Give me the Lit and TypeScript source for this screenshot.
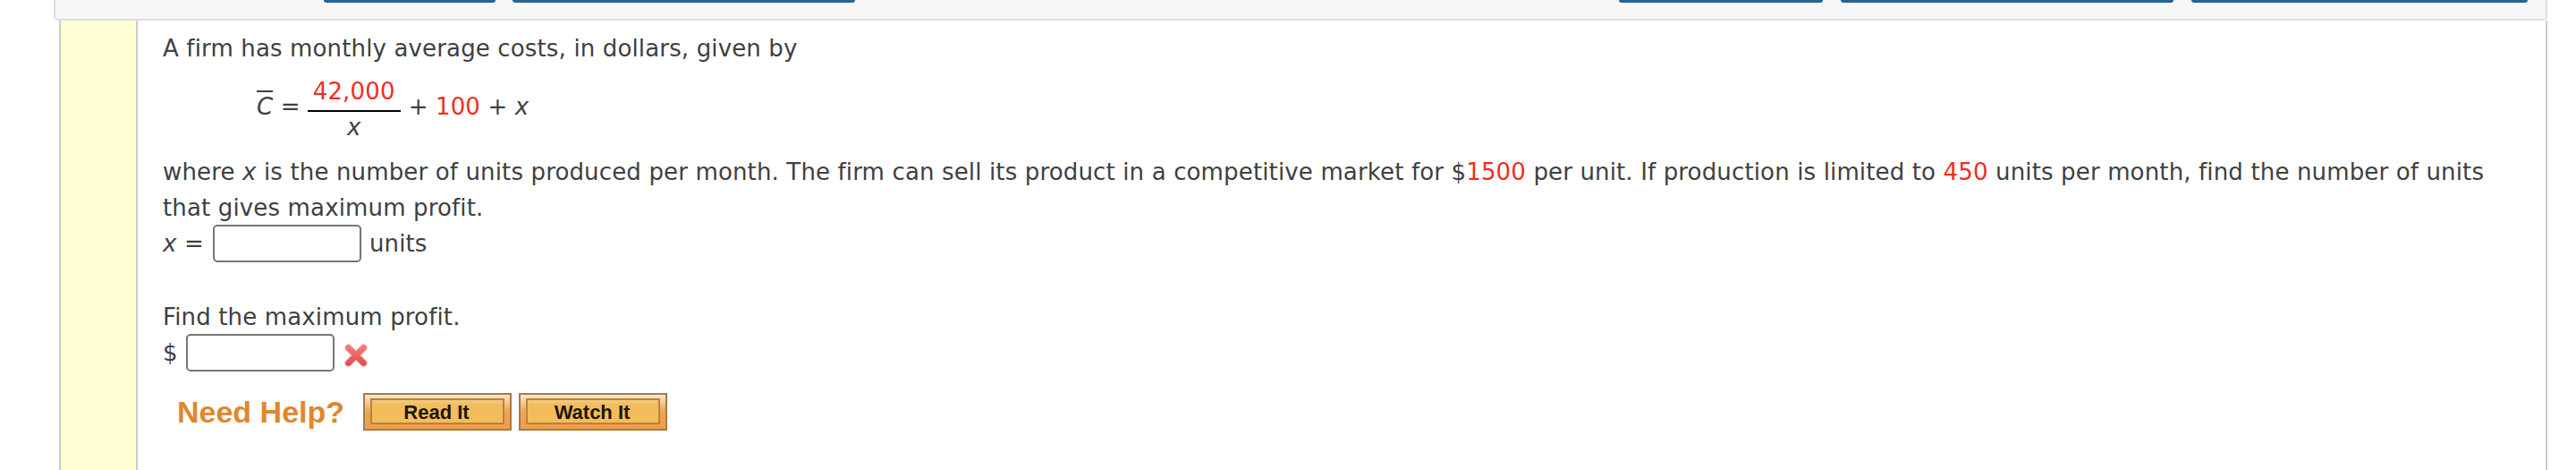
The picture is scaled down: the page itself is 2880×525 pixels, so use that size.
import { LitElement, html, css } from "lit";
import { customElement, property } from "lit/decorators.js";

@customElement("help-button")
class HelpButton extends LitElement {
  static styles = css`
    :host {
      display: block;
    }

    button {
      display: block;
      box-sizing: border-box;
      width: 166px;
      height: 42px;
      margin: 0;
      padding: 4px 6px 5px;
      border: 2px solid #ab7a42;
      background: linear-gradient(#fbe6d0, #f7cfa4 18%, #efa552 48%, #ee9f48);
      cursor: pointer;
    }

    span {
      display: block;
      box-sizing: border-box;
      height: 29px;
      padding-right: 2px;
      border: 2px solid #b98242;
      background: linear-gradient(#f5cb84, #f3bd5c 20%);
      color: #1c1608;
      font: bold 22px/27px "Liberation Sans", Arial, sans-serif;
      text-align: center;
    }
  `;

  @property() label = "";

  render() {
    return html`<button><span>${this.label}</span></button>`;
  }
}

@customElement("app-root")
class AppRoot extends LitElement {
  static styles = css`
    :host {
      display: block;
      height: 525px;
      overflow: hidden;
      background: #fff;
      color: #404040;
      font: 26px/40px "DejaVu Sans", Verdana, sans-serif;
      letter-spacing: 0.145px;
    }

    .toolbar {
      display: flex;
      box-sizing: border-box;
      width: 2788px;
      height: 23px;
      margin-left: 60px;
      padding-left: 300px;
      border: 2px solid #dedede;
      border-top: 0;
      border-radius: 0 0 5px 5px;
      background: #f6f6f6;
    }

    .tab {
      height: 3px;
      border-radius: 0 0 6px 6px;
      background: #246496;
    }

    .tab.a {
      width: 192px;
    }

    .tab.b {
      width: 383px;
      margin-left: 19px;
    }

    .tab.c {
      width: 228px;
      margin-left: auto;
    }

    .tab.d {
      width: 372px;
      margin-left: 20px;
    }

    .tab.e {
      width: 376px;
      margin: 0 20px;
    }

    .question {
      display: flex;
      box-sizing: border-box;
      width: 2782px;
      height: 502px;
      margin-left: 66px;
      border: solid #ccc;
      border-width: 0 2px;
    }

    .gutter {
      flex: none;
      width: 84px;
      border-right: 2px solid #ccc;
      background: #fffdd2;
    }

    .body {
      padding: 11px 0 0 28px;
    }

    .line {
      height: 40px;
      white-space: nowrap;
    }

    .row {
      display: flex;
      height: 40px;
    }

    .num {
      color: #ee2e22;
    }

    .equation {
      display: flex;
      height: 98px;
      padding-left: 105px;
    }

    .term {
      margin-top: 25px;
      white-space: pre;
    }

    .bar {
      display: inline-block;
      line-height: 36px;
      background: linear-gradient(#404040, #404040) 0 0 / 18px 2px no-repeat;
    }

    .fraction {
      width: 104px;
      margin: 8px 9px 0 8px;
      text-align: center;
    }

    .numerator {
      padding-bottom: 1px;
      border-bottom: 2px solid #000;
    }

    .denominator {
      margin-top: -3px;
    }

    input {
      box-sizing: border-box;
      width: 166px;
      height: 42px;
      margin: -1px 9px 0 10px;
      border: 2px solid #767676;
      border-radius: 5px;
      background: #fff;
    }

    .money input {
      margin-left: 9px;
    }

    .gap {
      height: 42px;
    }

    .wrong {
      width: 28px;
      height: 28px;
      margin: 9px 0 0 1px;
    }

    .help {
      display: flex;
      align-items: center;
      gap: 8px;
      margin-top: 25px;
      padding-left: 16px;
    }

    .need {
      width: 200px;
      color: #e0872e;
      font: bold 34px/40px "Liberation Sans", Arial, sans-serif;
      letter-spacing: 0;
    }
  `;

  render() {
    return html`
      <div class="toolbar">
        <div class="tab a"></div>
        <div class="tab b"></div>
        <div class="tab c"></div>
        <div class="tab d"></div>
        <div class="tab e"></div>
      </div>
      <div class="question">
        <div class="gutter"></div>
        <div class="body">
          <div class="line">A firm has monthly average costs, in dollars, given by</div>
          <div class="equation">
            <div class="term"><i class="bar">C</i> =</div>
            <div class="fraction">
              <div class="numerator num">42,000</div>
              <div class="denominator"><i>x</i></div>
            </div>
            <div class="term">+ <span class="num">100</span> + <i>x</i></div>
          </div>
          <div class="line">where <i>x</i> is the number of units produced per month. The firm can sell its product in a competitive market for $<span class="num">1500</span> per unit. If production is limited to <span class="num">450</span> units per month, find the number of units</div>
          <div class="line">that gives maximum profit.</div>
          <div class="row"><span><i>x</i> =</span><input aria-label="x" /><span>units</span></div>
          <div class="gap"></div>
          <div class="line">Find the maximum profit.</div>
          <div class="row money">
            <span>$</span><input aria-label="profit" />
            <svg class="wrong" viewBox="0 0 28 28">
              <defs>
                <linearGradient id="red" gradientUnits="userSpaceOnUse" x1="0" y1="0" x2="0" y2="28">
                  <stop offset="0" stop-color="#f28682" />
                  <stop offset="1" stop-color="#e04646" />
                </linearGradient>
              </defs>
              <g fill="none" stroke-linecap="round">
                <path d="M5.500 5.500l17 17M22.500 5.500l-17 17" stroke="#f4a9a6" stroke-width="8" />
                <path d="M5.500 5.500l17 17M22.500 5.500l-17 17" stroke="url(#red)" stroke-width="6.500" />
              </g>
            </svg>
          </div>
          <div class="help">
            <div class="need">Need Help?</div>
            <help-button label="Read It"></help-button>
            <help-button label="Watch It"></help-button>
          </div>
        </div>
      </div>
    `;
  }
}
